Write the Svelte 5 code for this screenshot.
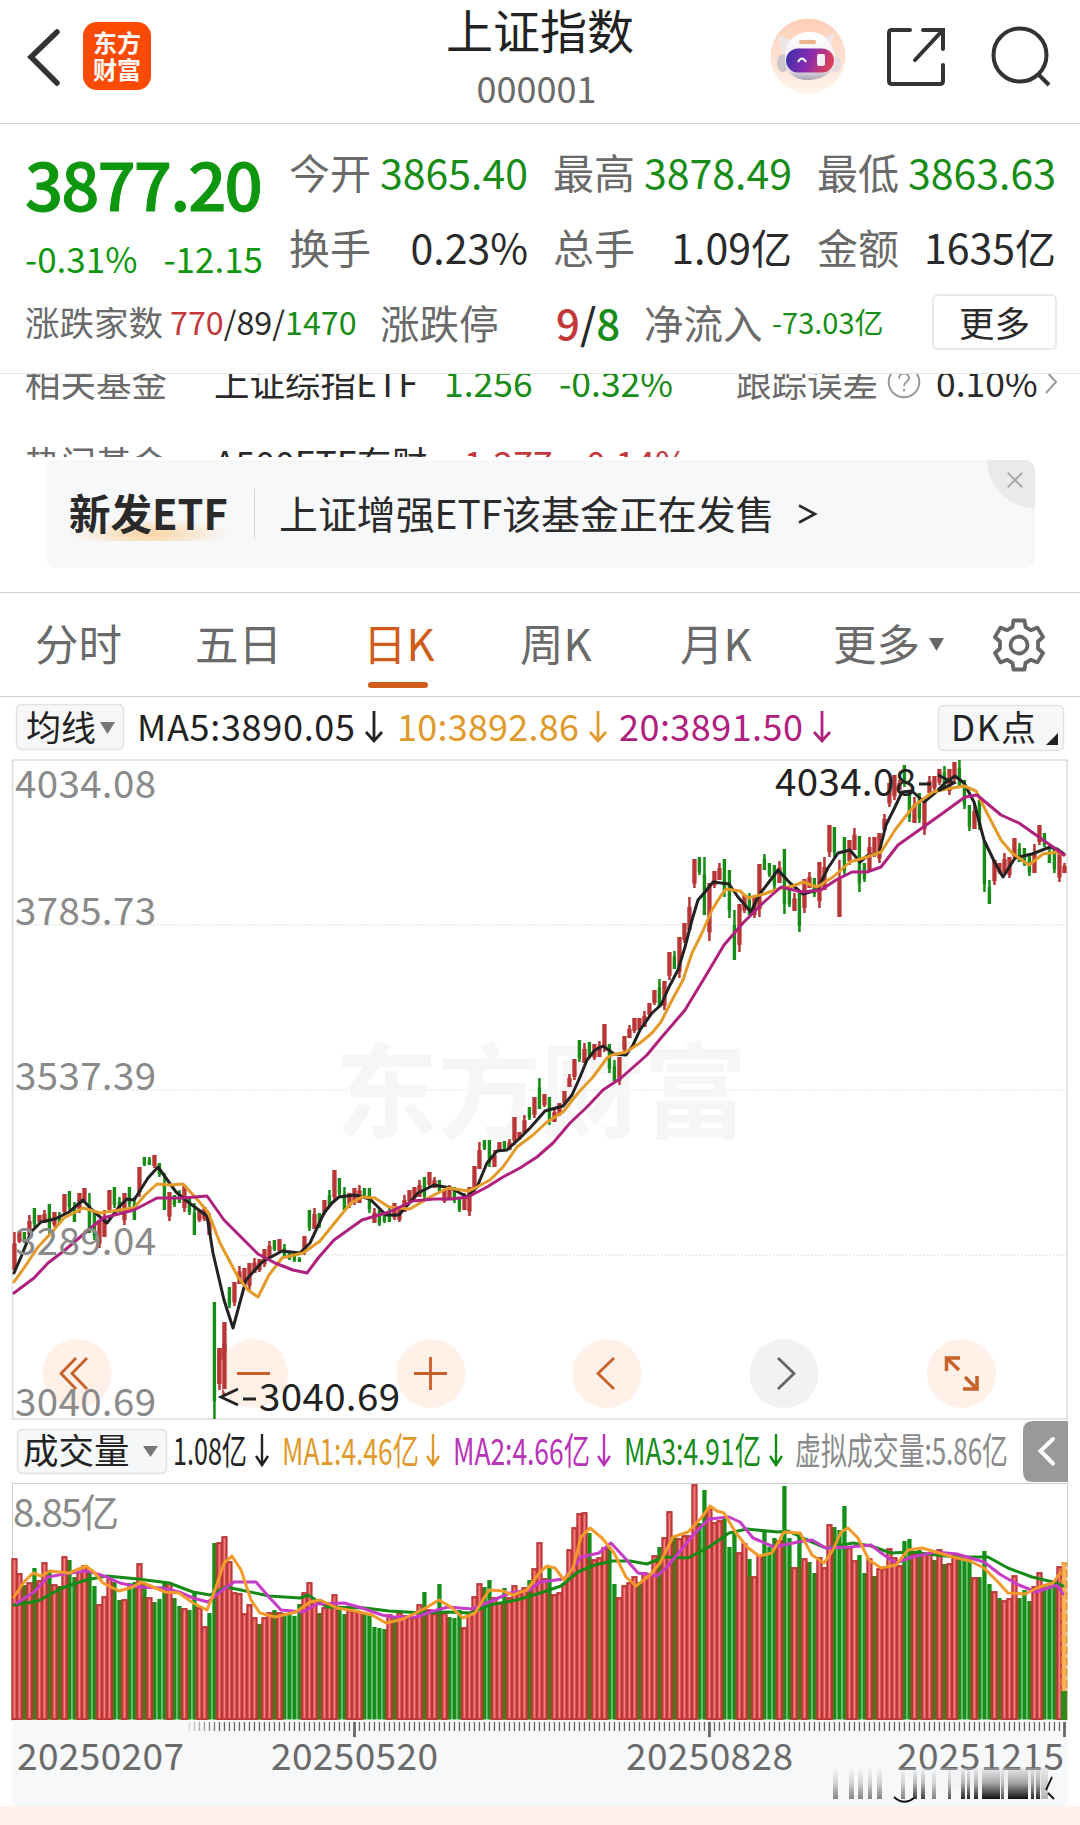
<script>
	const STEP = 5;
	const FIRST_X = 14.4;

	// direction, high, low, top of the volume bar
	const raw = `
r 1232 1270 1558,r 1232 1243 1573,g 1232 1243 1585,r 1215 1235 1582,g 1208 1227 1568,r 1215 1223 1580,r 1210 1223 1562,g 1204 1235 1570,r 1212 1227 1584,g 1212 1223 1586,
r 1194 1215 1556,g 1191 1210 1560,g 1202 1222 1577,r 1193 1213 1571,r 1188 1203 1565,g 1193 1233 1571,g 1212 1240 1586,r 1220 1248 1604,r 1210 1237 1596,r 1190 1213 1578,
g 1187 1208 1582,g 1197 1212 1600,r 1193 1225 1599,g 1187 1207 1583,g 1197 1220 1582,r 1167 1197 1563,g 1157 1166 1583,g 1157 1165 1597,r 1155 1168 1602,g 1163 1177 1599,
g 1173 1210 1581,r 1192 1221 1582,g 1195 1207 1598,g 1190 1203 1606,r 1185 1212 1608,g 1197 1215 1610,g 1203 1235 1593,r 1210 1222 1607,r 1207 1221 1626,r 1213 1235 1613,
g 1302 1419 1543,r 1348 1390 1542,r 1322 1395 1536,g 1287 1308 1561,r 1282 1306 1592,r 1266 1284 1593,r 1268 1285 1613,r 1263 1290 1604,r 1258 1273 1617,r 1259 1272 1624,
r 1249 1267 1617,r 1241 1257 1612,g 1240 1251 1610,r 1239 1253 1612,g 1244 1257 1613,g 1252 1260 1613,g 1252 1262 1616,g 1257 1262 1604,r 1236 1255 1592,g 1210 1231 1582,
r 1208 1229 1600,g 1213 1228 1613,r 1200 1215 1607,g 1190 1207 1605,r 1170 1202 1594,g 1178 1197 1607,g 1187 1210 1614,r 1193 1208 1610,r 1188 1205 1611,r 1185 1203 1611,
g 1188 1197 1612,g 1188 1213 1613,r 1208 1223 1627,g 1210 1226 1628,g 1212 1223 1629,g 1207 1222 1614,r 1203 1220 1618,r 1208 1222 1612,r 1195 1212 1615,r 1190 1203 1617,
r 1187 1200 1617,r 1180 1197 1604,g 1177 1200 1592,r 1172 1187 1609,r 1177 1188 1613,g 1180 1193 1584,r 1190 1203 1612,r 1185 1198 1617,g 1187 1203 1618,g 1197 1212 1610,
r 1193 1210 1627,r 1187 1216 1613,r 1166 1192 1596,r 1142 1169 1583,g 1140 1150 1587,g 1140 1167 1580,r 1150 1167 1597,r 1142 1152 1602,g 1141 1149 1588,r 1139 1150 1597,
r 1117 1145 1585,r 1132 1140 1593,r 1115 1133 1587,g 1107 1120 1580,r 1097 1118 1568,g 1078 1109 1542,r 1094 1107 1578,g 1097 1125 1568,r 1108 1122 1594,r 1103 1116 1592,
r 1091 1105 1583,r 1074 1087 1549,r 1059 1080 1527,g 1040 1062 1513,r 1043 1063 1512,g 1042 1058 1533,r 1044 1060 1559,r 1041 1057 1557,r 1024 1052 1547,g 1044 1073 1547,
g 1060 1081 1584,r 1057 1085 1597,r 1036 1052 1585,r 1025 1038 1582,r 1018 1033 1576,r 1018 1032 1582,r 1011 1027 1572,r 1003 1017 1573,r 990 1005 1555,g 979 1007 1547,
r 981 1010 1537,r 952 980 1511,g 951 969 1537,r 937 978 1538,r 923 943 1535,r 897 930 1535,r 859 888 1484,g 857 875 1523,g 857 915 1490,r 883 941 1508,
r 871 888 1522,r 863 880 1520,g 859 897 1518,g 870 918 1547,g 910 960 1531,r 904 952 1552,r 895 913 1543,g 893 915 1559,r 897 918 1576,r 864 917 1555,
g 854 870 1532,g 863 877 1547,g 865 889 1538,r 861 883 1540,g 849 914 1486,g 890 907 1538,r 893 911 1567,g 892 932 1533,r 879 913 1558,r 872 888 1562,
g 878 897 1573,r 862 908 1557,r 857 890 1567,r 825 857 1524,g 827 857 1527,r 860 917 1530,g 837 877 1506,r 840 865 1547,r 828 850 1560,g 836 892 1555,
g 863 882 1573,r 837 870 1558,r 837 857 1576,r 833 863 1568,r 814 830 1568,r 783 807 1548,r 775 800 1557,r 780 790 1565,g 765 787 1541,g 790 822 1539,
r 797 823 1553,g 793 823 1550,r 798 835 1553,r 776 793 1553,r 776 790 1560,r 769 785 1549,g 766 787 1564,r 769 795 1563,r 762 782 1553,g 760 787 1555,
g 780 809 1560,g 805 831 1558,r 803 829 1577,g 800 830 1577,g 841 892 1551,g 880 904 1584,r 860 885 1591,r 863 874 1598,r 853 873 1600,r 857 878 1598,
r 838 860 1575,g 843 862 1598,g 848 866 1590,g 853 876 1601,r 844 873 1586,r 825 845 1572,g 833 847 1585,g 847 863 1583,g 848 873 1583,r 852 882 1566,
r 863 873 1691`;

	// days whose volume bar is coloured against the candle
	const volumeUp = [27, 43, 59, 63, 75, 105, 113];
	const volumeDown = [28, 39, 49, 72, 76, 87, 125, 129, 159, 165, 172, 184, 197];

	const days = raw.trim().split(',').map((row, i) => {
		const [dir, high, low, vol] = row.trim().split(' ');
		const h = +high;
		const l = +low;
		const full = i % 3 !== 0;
		let up = dir === 'r';
		if (volumeUp.includes(i)) up = true;
		if (volumeDown.includes(i)) up = false;
		return {
			x: FIRST_X + STEP * i,
			red: dir === 'r',
			high: h,
			low: l,
			bodyTop: h + (l - h) * (full ? 0 : 0.3),
			bodyBottom: l - (l - h) * (full ? 0.15 : 0),
			vol: +vol,
			up
		};
	});
	const bars = days.slice(0, -1);

	// falling days squeezed between two rising ones are darkened
	const mixed = bars
		.map((d, i) => ({ d, a: bars[i - 1], b: bars[i + 1] }))
		.filter(({ d, a, b }) => !d.up && a && b && (a.up || b.up))
		.map(({ d, a, b }) => ({
			x: a.up ? d.x - 2.5 : d.x,
			w: a.up && b.up ? 5 : 2.5,
			y: Math.max(d.vol, a.up ? a.vol : 0, b.up ? b.vol : 0)
		}));

	const ma5 = '14,1273 21,1257 31,1232 41,1222 55,1219 69,1212 83,1200 91,1209 107,1223 119,1207 127,1199 134,1200 148,1178 158,1167 176,1192 188,1202 207,1216 213,1253 224,1300 233,1328 246,1280 262,1262 282,1251 300,1253 310,1243 324,1213 332,1203 339,1197 355,1195 370,1199 386,1215 399,1215 418,1193 434,1185 451,1188 467,1197 477,1187 487,1163 497,1151 507,1150 520,1138 530,1128 545,1111 563,1106 572,1095 580,1077 587,1060 595,1050 603,1046 614,1054 626,1055 633,1045 640,1030 652,1013 661,1005 669,987 678,970 685,947 692,920 698,900 705,892 713,882 729,884 738,897 751,912 759,895 769,882 778,870 790,883 803,894 817,890 828,868 838,853 850,850 860,862 867,856 879,853 886,825 895,807 902,792 912,791 924,802 936,792 945,783 955,776 964,783 974,802 984,840 995,863 1003,877 1015,858 1032,854 1050,847 1057,849 1064,854';
	const ma10 = '14,1282 24,1268 38,1247 52,1232 64,1218 83,1208 100,1213 119,1210 134,1208 145,1195 157,1184 169,1185 183,1184 196,1198 208,1212 220,1243 238,1277 248,1290 258,1297 269,1275 282,1258 303,1253 320,1241 337,1220 351,1203 362,1197 375,1198 389,1207 410,1209 430,1197 448,1188 468,1191 475,1188 490,1180 503,1167 517,1147 533,1135 547,1122 563,1112 578,1093 593,1077 607,1058 612,1055 626,1052 640,1043 652,1033 661,1022 671,1002 683,980 692,953 702,933 712,910 720,897 726,889 740,891 748,898 764,894 781,888 793,886 803,882 817,887 833,877 850,862 867,857 881,852 895,830 905,817 915,805 933,792 946,789 964,786 976,791 988,815 1001,840 1012,853 1029,865 1043,854 1057,852 1064,855';
	const ma20 = '14,1293 34,1278 48,1263 65,1250 86,1232 103,1218 134,1210 157,1198 183,1198 207,1196 224,1220 241,1237 258,1254 275,1263 293,1270 307,1273 319,1257 334,1240 362,1220 389,1212 413,1201 434,1199 451,1199 468,1197 487,1187 503,1177 520,1168 537,1157 553,1143 570,1123 587,1107 603,1090 621,1078 647,1055 661,1038 685,1010 705,977 724,945 743,923 764,902 781,887 802,892 821,890 836,880 852,872 867,872 881,867 898,845 922,828 943,813 965,797 977,795 1001,815 1019,823 1036,835 1053,847 1064,855';

	const vol1 = '14,1597 24,1582 33,1573 41,1576 50,1571 69,1573 86,1566 95,1573 103,1583 119,1591 133,1587 141,1582 153,1587 165,1592 179,1593 193,1603 207,1610 215,1590 224,1563 232,1556 241,1570 251,1600 260,1613 275,1617 296,1612 310,1602 320,1600 337,1608 355,1611 372,1615 386,1623 403,1619 424,1609 439,1600 451,1607 463,1618 475,1613 489,1590 503,1591 513,1595 527,1590 540,1572 547,1566 555,1568 564,1580 573,1568 581,1537 590,1528 602,1538 614,1553 626,1577 636,1586 650,1575 660,1563 673,1537 688,1532 702,1517 710,1506 717,1511 724,1513 736,1533 747,1547 759,1556 772,1553 784,1532 800,1533 812,1555 824,1563 833,1550 841,1532 848,1528 858,1538 869,1560 881,1568 896,1565 908,1550 922,1548 939,1553 953,1557 970,1561 984,1568 998,1582 1008,1593 1025,1594 1039,1587 1053,1583 1060,1573';
	const vol2 = '17,1603 34,1592 48,1577 69,1573 88,1571 107,1577 120,1583 138,1587 162,1588 179,1592 193,1598 208,1602 220,1592 234,1582 256,1582 269,1597 281,1610 303,1612 317,1604 344,1603 362,1608 382,1615 393,1617 417,1617 430,1612 448,1607 472,1609 489,1602 510,1593 530,1590 540,1582 564,1579 581,1557 599,1553 611,1543 624,1557 638,1573 657,1576 667,1567 681,1550 695,1533 709,1519 729,1517 740,1522 753,1538 774,1547 798,1542 812,1540 826,1548 850,1547 871,1545 884,1555 896,1563 912,1557 936,1552 957,1554 984,1562 1001,1575 1019,1585 1036,1592 1057,1585 1063,1594';
	const vol3 = '14,1605 38,1601 62,1588 86,1580 107,1576 138,1579 169,1583 193,1592 210,1595 226,1587 241,1590 269,1596 300,1598 308,1595 327,1607 365,1608 389,1611 424,1613 448,1612 470,1613 489,1605 517,1600 540,1593 561,1586 578,1572 595,1565 612,1561 630,1561 647,1564 664,1557 688,1558 709,1547 729,1533 747,1529 778,1532 788,1531 805,1539 826,1548 853,1543 871,1546 891,1553 912,1552 936,1555 957,1557 988,1557 1008,1568 1032,1577 1057,1583 1063,1586';

	const priceLabels = [
		{ y: 798, text: '4034.08' },
		{ y: 925, text: '3785.73' },
		{ y: 1090, text: '3537.39' },
		{ y: 1255, text: '3289.04' },
		{ y: 1416, text: '3040.69' }
	];

	const ticks = [];
	for (let i = 35; i <= 210; i++) {
		ticks.push({ x: FIRST_X + STEP * i, major: (i - 68) % 71 === 0, fade: Math.min(1, (i - 33) / 8) });
	}

	const tabs = [
		{ label: '分时', cls: 't1' },
		{ label: '五日', cls: 't2' },
		{ label: '日K', cls: 't3' },
		{ label: '周K', cls: 't4' },
		{ label: '月K', cls: 't5' }
	];
	let active = '日K';

	const volumeStats = [
		{ x: 173, w: 74, text: '1.08亿', arrow: 262, color: '#222' },
		{ x: 282, w: 137, text: 'MA1:4.46亿', arrow: 433, color: '#e09a2b' },
		{ x: 453, w: 137, text: 'MA2:4.66亿', arrow: 604, color: '#b832b8' },
		{ x: 624, w: 137, text: 'MA3:4.91亿', arrow: 776, color: '#168a16' },
		{ x: 795, w: 213, text: '虚拟成交量:5.86亿', arrow: 0, color: '#8a8a8a' }
	];

	// x, width, opacity
	const smears = [
		[833, 5, 0.5], [849, 5, 0.5], [858, 5, 0.5], [868, 4, 0.5], [877, 5, 0.5], [901, 4, 0.5], [913, 4, 0.8], [921, 4, 0.8], [932, 4, 0.5],
		[948, 3, 0.7], [961, 4, 0.9], [967, 3, 0.9], [974, 4, 0.9], [982, 18, 1], [1001, 3, 0.7], [1008, 20, 1], [1031, 3, 0.9], [1036, 4, 0.9], [1041, 7, 0.3]
	];
</script>

<main>
	<header>
		<svg class="back" viewBox="0 0 40 60"><path d="M33 6 L7 31 L33 57" /></svg>
		<div class="logo"><span>东方</span><span>财富</span></div>
		<div class="title">
			<h1>上证指数</h1>
			<p>000001</p>
		</div>
		<svg class="robot" viewBox="0 0 76 76">
			<defs>
				<linearGradient id="halo" x1="0" y1="0" x2="0" y2="1">
					<stop offset="0" stop-color="#ffceb5" /><stop offset="1" stop-color="#fff3ec" />
				</linearGradient>
				<linearGradient id="visor" x1="0" y1="0" x2="1" y2="0.2">
					<stop offset="0" stop-color="#3530a8" /><stop offset="0.55" stop-color="#8a2cae" /><stop offset="1" stop-color="#d8405c" />
				</linearGradient>
				<linearGradient id="shell" x1="0" y1="0" x2="0" y2="1">
					<stop offset="0" stop-color="#fff" /><stop offset="0.75" stop-color="#eeeaf0" /><stop offset="1" stop-color="#aaa6b2" />
				</linearGradient>
			</defs>
			<circle cx="38" cy="38" r="37.5" fill="url(#halo)" />
			<path d="M9 25 L8 17 L20 22 L16 44 Z M55 20 L64 15 L62 26 Z" fill="#ece7e9" />
			<ellipse cx="13" cy="45" rx="6" ry="9" fill="#c9c6ce" />
			<ellipse cx="65" cy="46" rx="6" ry="8" fill="#e4dce0" />
			<path d="M15 38 C16 20 28 14 40 14 C55 14 64 25 65 42 C65 55 52 62 37 62 C23 62 14 53 15 38 Z" fill="url(#shell)" />
			<rect x="16" y="30.500" width="48" height="24" rx="12" fill="url(#visor)" />
			<path d="M28 44 Q32 37 36 44" fill="none" stroke="#fff" stroke-width="2" />
			<rect x="47" y="36" width="8" height="12" rx="2" fill="#fff" opacity="0.9" />
			<rect x="29" y="22" width="17" height="4" rx="2" fill="#eab48c" />
		</svg>
		<svg class="share" viewBox="0 0 60 62">
			<path d="M24 4 H6 Q3 4 3 7 V55 Q3 58 6 58 H54 Q57 58 57 55 V39 M57 23 V4 H37 M56 5 L29 34" />
		</svg>
		<svg class="search" viewBox="0 0 62 62"><circle cx="29" cy="29" r="26.5" /><path d="M47.5 48.5 L58 59" /></svg>
	</header>

	<section class="quote">
		<div class="last">
			<strong>3877.20</strong>
			<div><span>-0.31%</span><span>-12.15</span></div>
		</div>
		<div class="stats">
			<div class="stat"><span>今开</span><b class="down">3865.40</b></div>
			<div class="stat"><span>最高</span><b class="down">3878.49</b></div>
			<div class="stat"><span>最低</span><b class="down">3863.63</b></div>
			<div class="stat"><span>换手</span><b>0.23%</b></div>
			<div class="stat"><span>总手</span><b>1.09亿</b></div>
			<div class="stat"><span>金额</span><b>1635亿</b></div>
		</div>
		<div class="breadth">
			<span class="small">涨跌家数</span>
			<span class="counts"><i class="up">770</i>/89/<i class="down">1470</i></span>
			<span class="mid">涨跌停</span>
			<span class="limit"><i class="up">9</i>/<i class="down">8</i></span>
			<span class="mid flow">净流入</span>
			<span class="inflow down">-73.03亿</span>
			<button>更多</button>
		</div>
	</section>

	<section class="funds">
		<div class="fund">
			<span class="f1">相关基金</span><span class="f2">上证综指ETF</span>
			<span class="f3 down">1.256</span><span class="f4 down">-0.32%</span>
			<span class="f5">跟踪误差</span>
			<svg viewBox="0 0 34 34"><circle cx="17" cy="17" r="15.3" /><path d="M12 13.5 C12 7 22 7 22 13 C22 17 17 16.500 17 21 M17 24 V26.500" /></svg>
			<span class="f6">0.10%</span>
			<svg class="go" viewBox="0 0 14 26"><path d="M2 2 L12 13 L2 24" /></svg>
		</div>
		<div class="fund second">
			<span class="f1">热门基金</span><span class="f2">A500ETF东财</span>
			<span class="f3 up">1.277</span><span class="f4 up">0.14%</span>
		</div>
	</section>

	<section class="banner">
		<strong>新发ETF</strong>
		<span class="rule"></span>
		<span class="promo">上证增强ETF该基金正在发售</span>
		<svg class="arrow" viewBox="0 0 20 20"><path d="M1 1.500 L17 10 L1 18.500" /></svg>
		<div class="close"><svg viewBox="0 0 20 20"><path d="M2 2 L18 18 M18 2 L2 18" /></svg></div>
	</section>

	<nav>
		{#each tabs as tab}
			<span class="tab {tab.cls}" class:active={tab.label === active}>{tab.label}</span>
		{/each}
		<span class="tab t6">更多</span>
		<svg class="caret" viewBox="0 0 15 13"><path d="M0 0 H15 L7.500 13 Z" /></svg>
		<svg class="gear" viewBox="0 0 52 54">
			<path d="M20.500 2.500 H31.500 L32.500 9 L38 12.300 L44.500 9.600 L50 19 L45 23.500 V30.500 L50 35 L44.500 44.400 L38 41.700 L32.500 45 L31.500 51.500 H20.500 L19.500 45 L14 41.700 L7.500 44.400 L2 35 L7 30.500 V23.500 L2 19 L7.500 9.600 L14 12.300 L19.500 9 Z" />
			<circle cx="26" cy="27" r="8.500" />
		</svg>
	</nav>

	<svg class="chart" viewBox="0 697 1080 1128" width="1080" height="1128">
		<defs>
			<linearGradient id="smear" x1="0" y1="0" x2="0" y2="1">
				<stop offset="0" stop-color="#000" stop-opacity="0" /><stop offset="0.5" stop-color="#000" stop-opacity="0.3" /><stop offset="1" stop-color="#000" stop-opacity="0.95" />
			</linearGradient>
			<linearGradient id="smearBg" x1="0" y1="0" x2="1" y2="0">
				<stop offset="0" stop-color="#fff" stop-opacity="0" /><stop offset="0.5" stop-color="#f0f0f0" stop-opacity="0.5" /><stop offset="1" stop-color="#ccc" stop-opacity="0.8" />
			</linearGradient>
		</defs>

		<!-- moving averages -->
		<rect class="chip" x="16.500" y="704.500" width="107" height="45" rx="5" />
		<text x="26" y="741" font-size="35" fill="#222">均线</text>
		<path d="M100 722 H115 L107.500 734 Z" fill="#777" />
		<g font-size="36">
			<text x="137" y="741" fill="#222" textLength="218">MA5:3890.05</text>
			<text x="397" y="741" fill="#e09a2b" textLength="182">10:3892.86</text>
			<text x="619" y="741" fill="#b0207e" textLength="184">20:3891.50</text>
		</g>
		<g fill="none" stroke-width="2.800">
			<path d="M374 711 V741 M366 732 L374 741 L382 732" stroke="#222" />
			<path d="M598 711 V741 M590 732 L598 741 L606 732" stroke="#e09a2b" />
			<path d="M822 711 V741 M814 732 L822 741 L830 732" stroke="#b0207e" />
		</g>
		<rect class="chip" x="938.500" y="705.500" width="125" height="45" rx="5" />
		<text x="951" y="741" font-size="35" fill="#222" textLength="85">DK点</text>
		<path d="M1058 733 V745 H1046 Z" fill="#222" />

		<!-- price -->
		<rect x="12.500" y="760" width="1054.500" height="659" fill="#fff" stroke="#ddd" stroke-width="1.500" />
		<path class="grid" d="M13 925 H1067 M13 1090 H1067 M13 1255 H1067" />
		<text class="watermark" x="335" y="1130" textLength="412">东方财富</text>

		{#each days as d}
			<g fill={d.red ? '#b93434' : '#168c16'}>
				<rect x={d.x - 1.2} y={d.high} width="2.500" height={d.low - d.high} />
				<rect x={d.x - (d.red ? 2.1 : 1.7)} y={d.bodyTop} width={d.red ? 4.3 : 3.4} height={d.bodyBottom - d.bodyTop} />
			</g>
		{/each}

		<g class="line">
			<polyline points={ma5} stroke="#222" />
			<polyline points={ma10} stroke="#e39a28" />
			<polyline points={ma20} stroke="#b0207e" />
		</g>

		<g class="pads">
			{#each [77, 253.5, 431, 607, 784, 961.5] as cx, i}
				<ellipse {cx} cy="1373.500" rx="34.500" ry="34.500" fill={i === 4 ? '#f2f2f2' : '#fff0e8'} />
			{/each}
			<path d="M76 1358 L61 1373.500 L76 1389 M87 1358 L72 1373.500 L87 1389" />
			<path d="M237 1373.500 H270" />
			<path d="M414 1373.500 H447 M430.500 1357 V1390" />
			<path d="M614 1358 L598 1373.500 L614 1389" />
			<path class="off" d="M778 1358 L794 1373.500 L778 1389" />
			<path class="bold" d="M959 1370 L946.500 1358 M946.500 1371 V1358 H960 M965 1377 L977 1389 M977 1376 V1389 H963" />
		</g>
		<!-- the lowest candles stay above the zoom-out pad -->
		{#each days.slice(41, 43) as d}
			<rect x={d.x - 2.1} y={d.high} width="4.300" height={d.low - d.high - 6} fill="#b93434" />
		{/each}

		<g fill="#8a8a8a" font-size="38.500">
			{#each priceLabels as p}
				<text x="15" y={p.y} textLength="141">{p.text}</text>
			{/each}
		</g>
		<g font-size="38.500" fill="#222">
			<text x="259" y="1411" textLength="141">3040.69</text>
			<text x="775" y="796" textLength="141">4034.08</text>
			<path d="M238 1389 L221 1397 L238 1405 M243 1399 H256 M919 784 H931 M938 775 L954 783 L938 791" fill="none" stroke="#222" stroke-width="2.800" />
		</g>

		<!-- volume -->
		<rect class="chip" x="17.500" y="1429.500" width="149" height="44" rx="5" />
		<text x="23" y="1464" font-size="35.500" fill="#222">成交量</text>
		<path d="M143 1446 H158 L150.500 1457 Z" fill="#777" />
		{#each volumeStats as s}
			<text x={s.x} y="1465" font-size="37" fill={s.color} textLength={s.w} lengthAdjust="spacingAndGlyphs">{s.text}</text>
			{#if s.arrow}
				<path d="M{s.arrow} 1434 V1465 M{s.arrow - 6} 1456 L{s.arrow} 1465 L{s.arrow + 6} 1456" fill="none" stroke={s.color} stroke-width="2.400" />
			{/if}
		{/each}
		<path d="M1068 1421 H1033 Q1023 1421 1023 1431 V1472 Q1023 1482 1033 1482 H1068 Z" fill="#999" />
		<path d="M1053 1439 L1040.500 1451 L1053 1463.500" fill="none" stroke="#fff" stroke-width="4" stroke-linecap="round" />

		<path d="M12.500 1720 V1483.500 H1067.500 V1720" fill="#fff" stroke="#ccc" />
		<text x="13" y="1527" font-size="38.500" fill="#8a8a8a" textLength="106">8.85亿</text>

		{#each bars as d}
			{#if !d.up}
				<rect x={d.x - 2.1} y={d.vol} width="4.300" height={1719.500 - d.vol} fill="#14901a" />
			{/if}
		{/each}
		{#each mixed as m}
			<rect x={m.x} y={m.y} width={m.w} height={1719.500 - m.y} fill="#54701a" />
		{/each}
		{#each bars as d}
			{#if d.up}
				<rect x={d.x - 2} y={d.vol + 1.2} width="4.100" height={1718 - d.vol} fill="#f98080" stroke="#bd3838" stroke-width="2.200" />
			{/if}
		{/each}
		<rect x="1062" y="1563" width="4.500" height="156" fill="#f9b45c" stroke="#f0952a" stroke-width="1.500" stroke-dasharray="8 3" />
		<rect x="1061" y="1691" width="6" height="29" fill="#2f8a1a" />

		<g class="line">
			<polyline points={vol3} stroke="#168a16" />
			<polyline points={vol2} stroke="#c63cc6" />
			<polyline points={vol1} stroke="#f39a2b" />
		</g>

		<!-- dates -->
		<rect x="12.500" y="1720" width="1055" height="86" fill="#f7f8fa" />
		{#each ticks as t}
			<rect x={t.x - (t.major ? 1.3 : 0.6)} y="1722" width={t.major ? 2.8 : 1.3} height={t.major ? 15 : 9} fill="#666" opacity={t.fade} />
		{/each}
		<g fill="#6a6a6a" font-size="37">
			<text x="17" y="1770" textLength="167">20250207</text>
			<text x="271" y="1770" textLength="167">20250520</text>
			<text x="626" y="1770" textLength="167">20250828</text>
			<text x="897" y="1770" textLength="167">20251215</text>
		</g>
		<rect x="828" y="1768" width="220" height="22" fill="url(#smearBg)" opacity="0.5" />
		{#each smears as [x, w, o]}
			<rect {x} y="1767" width={w} height="32" fill="url(#smear)" opacity={o} />
		{/each}
		<path d="M894 1797 Q904 1806 914 1798 M1052 1777 L1046 1790 M1048 1793 L1054 1799" fill="none" stroke="#111" stroke-width="1.800" />
		<rect x="0" y="1806" width="1080" height="19" fill="#fff1ec" />
	</svg>
</main>

<style>
	:global(body) {
		background: #fff;
	}

	main {
		width: 1080px;
		height: 1825px;
		overflow: hidden;
		background: #fff;
		color: #2a2a2a;
		font-family: "Noto Sans CJK SC", sans-serif;
	}

	h1, p {
		margin: 0;
		font-weight: 400;
	}

	i {
		font-style: normal;
	}

	.up {
		color: #c4373a !important;
	}

	.down {
		color: #178c17 !important;
	}

	header {
		display: flex;
		height: 123px;
		border-bottom: 1px solid #ccc;
	}

	header svg {
		fill: none;
		flex: none;
	}

	.back {
		width: 40px;
		height: 60px;
		margin: 26px 0 0 24px;
		stroke: #333;
		stroke-width: 5.5;
		stroke-linecap: round;
	}

	.logo {
		display: flex;
		flex-direction: column;
		justify-content: center;
		align-items: center;
		flex: none;
		width: 68px;
		height: 68px;
		margin: 22px 0 0 19px;
		border-radius: 14px;
		background: #fb4a04;
		color: #fff;
		font-size: 24px;
		font-weight: 700;
		line-height: 29px;
	}

	.logo span {
		margin-top: -2px;
	}

	.title {
		width: 260px;
		margin-left: 258px;
		text-align: center;
	}

	.title h1 {
		width: 262px;
		margin-top: -1px;
		font-size: 47px;
		line-height: 60px;
		color: #222;
	}

	.title p {
		width: 255px;
		margin-top: 9px;
		font-size: 36px;
		line-height: 38px;
		color: #6a6a6a;
	}

	.robot {
		width: 76px;
		height: 76px;
		margin: 18px 0 0 101px;
	}

	.share {
		width: 60px;
		height: 62px;
		margin: 26px 0 0 40px;
		stroke: #333;
		stroke-width: 4;
		stroke-linecap: round;
	}

	.search {
		width: 62px;
		height: 62px;
		margin: 26px 0 0 45px;
		stroke: #333;
		stroke-width: 4;
	}

	.quote {
		display: grid;
		grid-template-columns: 263px 768px;
		grid-template-rows: 163px 74px;
		column-gap: 26px;
		height: 249px;
		border-bottom: 1px solid #e4e4e4;
	}

	.last {
		padding-left: 25px;
		color: #0f960f;
	}

	.last strong {
		display: block;
		margin-top: 20px;
		font-size: 67px;
		font-weight: 500;
		letter-spacing: -1.9px;
		line-height: 76px;
		-webkit-text-stroke: 1px #0f960f;
	}

	.last div {
		display: flex;
		justify-content: space-between;
		margin-top: 18px;
		font-size: 35px;
		line-height: 40px;
	}

	.stats {
		display: grid;
		grid-template-columns: repeat(3, 239px);
		column-gap: 25px;
		grid-auto-rows: 75px;
		padding-top: 10px;
	}

	.stat {
		display: flex;
		justify-content: space-between;
		font-size: 41px;
		line-height: 74px;
	}

	.stat span {
		color: #6a6a6a;
	}

	.stat b {
		font-weight: 400;
	}

	.breadth {
		grid-column: 1 / 3;
		display: flex;
		align-items: center;
		height: 71px;
		padding-left: 25px;
		white-space: nowrap;
	}

	.breadth span {
		flex: none;
		margin-top: -3px;
	}

	.small {
		width: 145px;
		font-size: 34.5px;
		color: #6a6a6a;
	}

	.counts {
		width: 210px;
		font-size: 32.3px;
	}

	.mid {
		width: 176px;
		font-size: 39.5px;
		color: #6a6a6a;
	}

	.limit {
		width: 88px;
		font-size: 42px;
		font-weight: 500;
	}

	.mid.flow {
		width: 128px;
	}

	.inflow {
		width: 160px;
		font-size: 29px;
	}

	button {
		width: 125px;
		height: 56px;
		margin-top: -2px;
		padding: 0;
		border: 2px solid #e8e8e8;
		border-radius: 6px;
		background: #fff;
		color: #2a2a2a;
		font: 35.5px/48px "Noto Sans CJK SC", sans-serif;
	}

	.funds {
		height: 83px;
		overflow: hidden;
	}

	.fund {
		display: flex;
		align-items: center;
		height: 50px;
		margin-top: -17px;
		padding-left: 25px;
		font-size: 35.5px;
		line-height: 50px;
		white-space: nowrap;
	}

	.fund.second {
		margin-top: 30px;
	}

	.fund span {
		flex: none;
	}

	.f1 { width: 189px; color: #6a6a6a; }
	.f2 { width: 230px; }
	.f3 { width: 115px; }
	.f4 { width: 177px; }
	.f5 { width: 151px; color: #6a6a6a; }
	.f6 { width: 108px; }
	.second .f2 { width: 250px; }
	.second .f3 { width: 122px; }

	.fund svg {
		flex: none;
		width: 34px;
		height: 34px;
		margin-right: 15px;
		fill: none;
		stroke: #999;
		stroke-width: 2;
	}

	.fund .go {
		width: 14px;
		height: 26px;
		margin: 0;
	}

	.banner {
		position: relative;
		display: flex;
		align-items: center;
		width: 989px;
		height: 108px;
		margin: 3px 0 0 46px;
		border-radius: 10px;
		background: #f7f8fa;
		overflow: hidden;
	}

	.banner strong {
		width: 162px;
		margin: -3px 0 0 23px;
		font-size: 41.5px;
		line-height: 57px;
		white-space: nowrap;
		background: radial-gradient(ellipse 80px 16px at 80px 50px, #fbd3a0, transparent) no-repeat;
	}

	.rule {
		width: 1px;
		height: 50px;
		margin: 0 24px 0 23px;
		background: #d4d4d4;
	}

	.promo {
		margin-top: -4px;
		font-size: 38.9px;
		white-space: nowrap;
	}

	.arrow {
		width: 20px;
		height: 20px;
		margin-left: 24px;
		fill: none;
		stroke: #2a2a2a;
		stroke-width: 2.6;
	}

	.close {
		position: absolute;
		top: 0;
		right: 0;
		width: 48px;
		height: 48px;
		border-radius: 0 0 0 48px;
		background: #e9eaec;
	}

	.close svg {
		display: block;
		width: 18px;
		height: 18px;
		margin: 11px 0 0 19px;
		stroke: #aaa;
		stroke-width: 2.2;
	}

	nav {
		display: flex;
		align-items: center;
		height: 103px;
		margin-top: 24px;
		border-top: 1px solid #d0d0d0;
		border-bottom: 1px solid #d0d0d0;
		font-size: 43.5px;
		color: #6a6a6a;
	}

	.tab {
		position: relative;
		flex: none;
		margin-top: -4px;
		line-height: 60px;
	}

	.t1 { width: 160px; margin-left: 35px; }
	.t2 { width: 168px; }
	.t3 { width: 157px; }
	.t4 { width: 160px; }
	.t5 { width: 153px; }
	.t6 { width: 96px; }

	.active {
		color: #cf5c1a;
	}

	.active::after {
		content: "";
		position: absolute;
		left: 5px;
		bottom: -15px;
		width: 60px;
		height: 6px;
		border-radius: 3px;
		background: #cf5c1a;
	}

	.caret {
		width: 15px;
		height: 13px;
		fill: #666;
	}

	.gear {
		width: 52px;
		height: 54px;
		margin-left: 49px;
		fill: none;
		stroke: #666;
		stroke-width: 3.8;
		stroke-linejoin: round;
	}

	.chart {
		display: block;
	}

	.chip {
		fill: #f6f7f9;
		stroke: #e2e2e2;
		stroke-width: 1.5;
	}

	.grid {
		stroke: #ddd;
		stroke-dasharray: 2 1.5;
	}

	.watermark {
		font-size: 103px;
		font-weight: 700;
		fill: #f6f6f6;
	}

	.line {
		fill: none;
		stroke-width: 3;
		stroke-linejoin: round;
		stroke-linecap: round;
	}

	.pads path {
		fill: none;
		stroke: #c8602a;
		stroke-width: 2.8;
	}

	.pads .off {
		stroke: #666;
	}

	.pads .bold {
		stroke-width: 3.5;
	}
</style>
